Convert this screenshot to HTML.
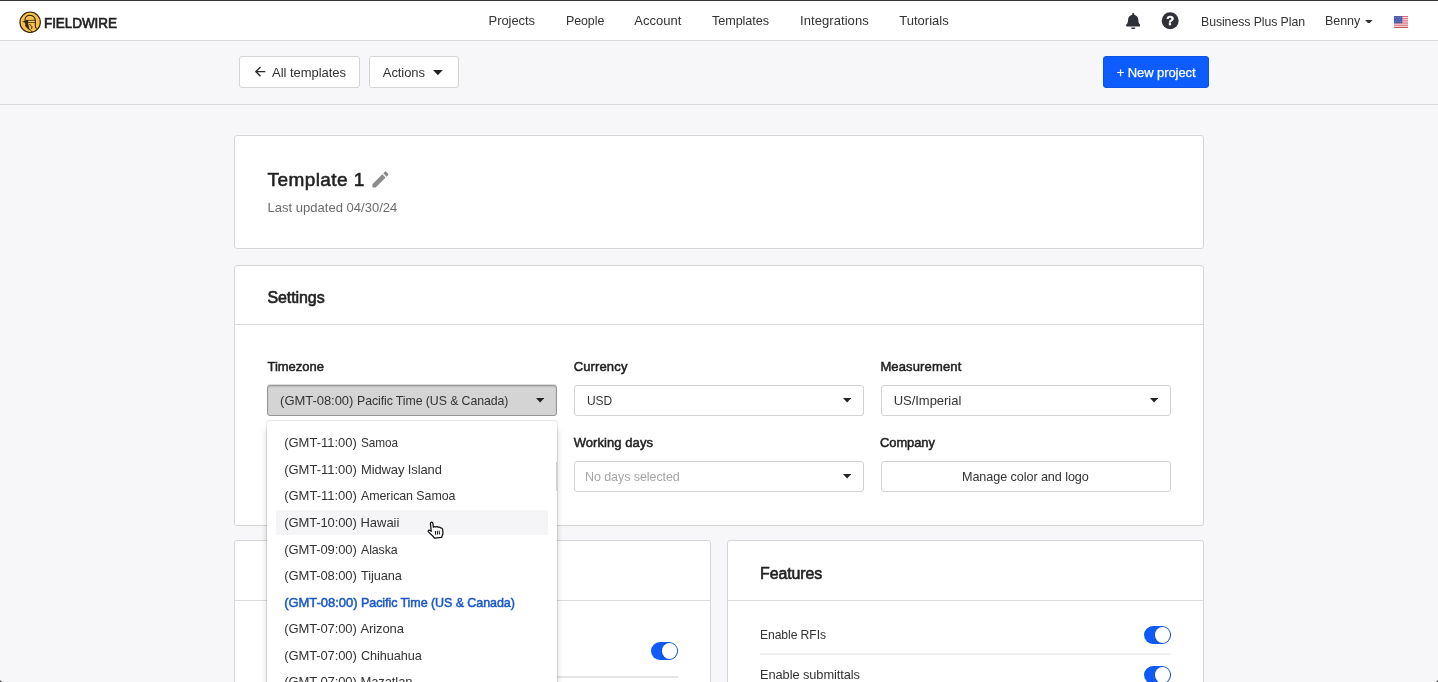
<!DOCTYPE html>
<html lang="en">
<head>
<meta charset="utf-8">
<title>Template 1 – Fieldwire</title>
<style>
*{box-sizing:border-box;margin:0;padding:0}
html,body{width:1438px;height:682px;overflow:hidden;background:#f7f7f9;font-family:"Liberation Sans",sans-serif;color:#333}
body{position:relative}
#app{position:absolute;left:0;top:0;width:1438px;height:682px;overflow:hidden;will-change:transform}
.t{position:absolute;white-space:pre;line-height:20px;height:20px;transform-origin:0 50%}
.abs{position:absolute}
.topline{left:0;top:0;width:1438px;height:1px;background:#353535}
.topbar{left:0;top:1px;width:1438px;height:40px;background:#fff;border-bottom:1px solid #dadada}
.subbar{left:0;top:41px;width:1438px;height:64px;background:#f7f7f9;border-bottom:1px solid #dadada}
.btn{position:absolute;top:56px;height:32px;background:#fff;border:1px solid #d4d4d4;border-radius:3px}
.btn.primary{background:#0d5cff;border-color:#0b52e6}
.card{position:absolute;background:#fff;border:1px solid #d5d5d5;border-radius:3px}
.hr{position:absolute;height:1px;background:#dcdcdc}
.row-hr{position:absolute;height:1px;background:#ececec}
.sel{position:absolute;width:290px;height:31px;background:#fff;border:1px solid #d2d2d2;border-radius:3px}
.sel.open{background:#d4d4d4;border-color:#959595;box-shadow:0 -1px 0 rgba(0,0,0,.13),inset 0 1px 2px rgba(0,0,0,.13)}
.menu{position:absolute;left:267px;top:421px;width:290px;height:280px;background:#fff;border-radius:3px;box-shadow:0 0 0 1px rgba(0,0,0,.09),0 8px 6px rgba(0,0,0,.2)}
.hover{position:absolute;left:276px;top:510px;width:272px;height:24.5px;background:#f5f5f8;border-radius:2px}
.help{width:17px;height:17px;border-radius:50%;background:#2f3137;color:#fff;font-size:13px;font-weight:700;line-height:17.5px;text-align:center;-webkit-text-stroke:.4px #fff}
.tog{position:absolute;width:27px;height:17.5px;border-radius:9px;background:#0f5af8}
.tog i{position:absolute;right:1px;top:1px;width:15.5px;height:15.5px;border-radius:50%;background:#fff;box-shadow:0 0 0 .6px rgba(22,60,150,.6)}
</style>
</head>
<body>
<div id="app">
<div class="abs topline"></div>

<header class="abs topbar"></header>
<svg class="abs" style="left:18px;top:10px" width="24" height="24" viewBox="0 0 24 24">
  <circle cx="12.15" cy="12.25" r="10.2" fill="#f6c04d" stroke="#2d1e04" stroke-width="1.15"/>
  <path d="M7 9.6C7.1 7 9.4 5.2 11.9 5.3c3 .1 5.300 2.200 5.500 6.100l-.1 4.600c0 1.300.4 1.900 1.100 2.300" fill="none" stroke="#2d1e04" stroke-width="1.05" stroke-linecap="round"/>
  <path d="M8.600 10.400H17.300M8.600 12.300H17.300" stroke="#2d1e04" stroke-width=".85" fill="none"/>
  <path d="M10.800 11.350H16.600" stroke="#fbdc8c" stroke-width=".8" fill="none"/>
  <path d="M3.800 12l5-1.900v2.500z" fill="#2d1e04"/>
  <path d="M6.300 10.300h3.600l.3 3.800 1.500 5.700-2.600-1.500-2.100-2.500.55-1.700-.9-1.100z" fill="#33270f"/>
  <path d="M11.500 14c.6 1.400 2.300 1.700 2.500 3 .1 .8-.3 1.500-.7 2" fill="none" stroke="#2d1e04" stroke-width=".95"/>
  <path d="M10.400 18.900c1.300.6 2.700 1.600 3.700 2.900" fill="none" stroke="#2d1e04" stroke-width="1"/>
</svg>
<span class="t brand" style="left:44.3px;top:13px;font-size:14px;color:#222;letter-spacing:-0.080px;transform:scaleX(0.9657);-webkit-text-stroke:.65px #222;">FIELDWIRE</span>
<nav>
<span class="t nav" style="left:488.6px;top:11px;font-size:13px;color:#333;letter-spacing:-0.081px;">Projects</span><span class="t nav" style="left:565.7px;top:11px;font-size:13px;color:#333;letter-spacing:-0.080px;transform:scaleX(0.9555);">People</span><span class="t nav" style="left:634.3px;top:11px;font-size:13px;color:#333;letter-spacing:0.003px;">Account</span><span class="t nav" style="left:712.3px;top:11px;font-size:13px;color:#333;letter-spacing:-0.080px;transform:scaleX(0.9725);">Templates</span><span class="t nav" style="left:800.0px;top:11px;font-size:13px;color:#333;letter-spacing:0.069px;">Integrations</span><span class="t nav" style="left:899.3px;top:11px;font-size:13px;color:#333;letter-spacing:0.003px;">Tutorials</span>
</nav>
<!-- bell -->
<svg class="abs" style="left:1125.8px;top:12.6px" width="14.4" height="16.5" viewBox="0 0 448 512"><path fill="#2f3137" d="M224 512c35.32 0 63.97-28.65 63.97-64H160.03c0 35.35 28.65 64 63.97 64zm215.39-149.71c-19.32-20.76-55.47-51.99-55.47-154.29 0-77.7-54.48-139.9-127.94-155.16V32c0-17.67-14.32-32-31.98-32s-31.98 14.33-31.98 32v20.84C118.56 68.1 64.08 130.3 64.08 208c0 102.3-36.15 133.53-55.47 154.29-6 6.45-8.66 14.16-8.61 21.71.11 16.4 12.98 32 32.1 32h383.8c19.12 0 32-15.6 32.1-32 .05-7.55-2.61-15.27-8.61-21.71z"/></svg>
<!-- help -->
<div class="abs help" style="left:1161px;top:12px;transform:translate(.7px,.2px)">?</div>
<span class="t nav" style="left:1200.6px;top:12px;font-size:13px;color:#333;letter-spacing:-0.080px;transform:scaleX(0.9461);">Business Plus Plan</span><span class="t nav" style="left:1325.0px;top:11px;font-size:13px;color:#333;letter-spacing:-0.080px;transform:scaleX(0.9629);">Benny</span>
<svg class="abs" style="left:1365.2px;top:19.6px" width="7.6" height="3.9" viewBox="0 0 7.6 3.9"><path d="M0 0H7.6L3.8 3.9Z" fill="#333"/></svg>
<!-- flag -->
<svg class="abs" style="left:1393.8px;top:15.8px" width="14.6" height="12" viewBox="0 0 14.6 12">
  <rect width="14.6" height="12" rx=".6" fill="#f6eaec"/>
  <g fill="#e0636d"><rect y="0" width="14.600" height=".95"/><rect y="1.850" width="14.600" height=".95"/><rect y="3.700" width="14.600" height=".95"/><rect y="5.550" width="14.600" height=".95"/><rect y="7.400" width="14.600" height=".95"/><rect y="9.250" width="14.600" height=".95"/><rect y="11" width="14.600" height="1" rx=".4" fill="#c9505b"/></g>
  <rect width="8.300" height="7.300" fill="#4a5eab"/>
  <g fill="#aab3dc"><circle cx="1.500" cy="1.500" r=".45"/><circle cx="4.100" cy="1.500" r=".45"/><circle cx="6.700" cy="1.500" r=".45"/><circle cx="2.800" cy="3.600" r=".45"/><circle cx="5.400" cy="3.600" r=".45"/><circle cx="1.500" cy="5.700" r=".45"/><circle cx="4.100" cy="5.700" r=".45"/><circle cx="6.700" cy="5.700" r=".45"/></g>
</svg>

<section class="abs subbar"></section>
<div class="btn" style="left:239px;width:121px"></div>
<svg class="abs" style="left:254.5px;top:66.1px" width="11" height="11.4" viewBox="0 0 11 11.4"><path d="M10.3 5.6H1.500M5.500 1L.900 5.600l4.600 4.600" fill="none" stroke="#2a2a2a" stroke-width="1.4"/></svg>
<span class="t" style="left:272.1px;top:63px;font-size:13px;color:#333;letter-spacing:-0.043px;">All templates</span>
<div class="btn" style="left:369px;width:90px"></div>
<span class="t" style="left:382.8px;top:63px;font-size:13px;color:#333;letter-spacing:-0.073px;">Actions</span>
<svg class="abs" style="left:432.8px;top:70.1px" width="9.8" height="5.2" viewBox="0 0 9.8 5.2"><path d="M0 0H9.8L4.9 5.2Z" fill="#222"/></svg>
<div class="btn primary" style="left:1103px;width:106px"></div>
<span class="t" style="left:1116.7px;top:63px;font-size:13px;color:#fff;letter-spacing:-0.079px;-webkit-text-stroke:.25px #fff;">+ New project</span>

<!-- card: template title -->
<section class="card" style="left:234px;top:135px;width:970px;height:114px"></section>
<span class="t h1" style="left:267.5px;top:170px;font-size:19px;color:#222;letter-spacing:0.427px;-webkit-text-stroke:.55px #222;">Template 1</span>
<svg class="abs" style="left:371.5px;top:170.5px" width="17" height="17" viewBox="0 0 24 24"><path fill="#8c8c8c" d="M3 17.25V21h3.75L17.81 9.94l-3.75-3.75L3 17.25zM20.71 7.04a.996.996 0 0 0 0-1.41l-2.34-2.34a.996.996 0 0 0-1.41 0l-1.83 1.83 3.75 3.75 1.83-1.83z" transform="translate(-3.2 -3.2) scale(1.26)"/></svg>
<span class="t" style="left:267.5px;top:198px;font-size:13px;color:#6b6b6b;letter-spacing:0.020px;">Last updated 04/30/24</span>

<!-- card: settings -->
<section class="card" style="left:234px;top:265px;width:970px;height:261px"></section>
<span class="t h2" style="left:267.4px;top:288px;font-size:16px;color:#222;letter-spacing:-0.073px;-webkit-text-stroke:.6px #222;">Settings</span>
<div class="hr" style="left:235px;top:324px;width:968px"></div>
<span class="t lbl" style="left:267.5px;top:357px;font-size:13px;color:#222;letter-spacing:-0.030px;-webkit-text-stroke:.5px #222;">Timezone</span><span class="t lbl" style="left:573.7px;top:357px;font-size:13px;color:#222;letter-spacing:0.136px;-webkit-text-stroke:.5px #222;">Currency</span><span class="t lbl" style="left:880.4px;top:357px;font-size:13px;color:#222;letter-spacing:0.142px;-webkit-text-stroke:.5px #222;">Measurement</span>
<div class="sel open" style="left:267px;top:385px"></div>
<span class="t" style="left:280.1px;top:391px;font-size:13px;color:#333;letter-spacing:-0.039px;">(GMT-08:00)</span><span class="t" style="left:356.8px;top:391px;font-size:13px;color:#333;letter-spacing:-0.080px;transform:scaleX(0.9472);">Pacific Time (US &amp; Canada)</span>
<svg class="abs" style="left:536.3px;top:398.2px" width="8.2" height="4.4" viewBox="0 0 8.2 4.4"><path d="M0 0H8.2L4.1 4.4Z" fill="#222"/></svg>
<div class="sel" style="left:574px;top:385px"></div>
<span class="t" style="left:586.9px;top:391px;font-size:13px;color:#333;letter-spacing:-0.080px;transform:scaleX(0.9196);">USD</span>
<svg class="abs" style="left:843.3px;top:398.2px" width="8.2" height="4.4" viewBox="0 0 8.2 4.4"><path d="M0 0H8.2L4.1 4.4Z" fill="#222"/></svg>
<div class="sel" style="left:881px;top:385px"></div>
<span class="t" style="left:893.7px;top:391px;font-size:13px;color:#333;letter-spacing:-0.032px;">US/Imperial</span>
<svg class="abs" style="left:1150.3px;top:398.2px" width="8.2" height="4.4" viewBox="0 0 8.2 4.4"><path d="M0 0H8.2L4.1 4.4Z" fill="#222"/></svg>
<div class="sel" style="left:267px;top:461px"></div>
<span class="t lbl" style="left:573.7px;top:433px;font-size:13px;color:#222;letter-spacing:0.071px;-webkit-text-stroke:.5px #222;">Working days</span><span class="t lbl" style="left:880.4px;top:433px;font-size:13px;color:#222;letter-spacing:-0.080px;transform:scaleX(0.9953);-webkit-text-stroke:.5px #222;">Company</span>
<div class="sel" style="left:574px;top:461px"></div>
<span class="t" style="left:585.2px;top:467px;font-size:13px;color:#a5a5a5;letter-spacing:-0.080px;transform:scaleX(0.9621);">No days selected</span>
<svg class="abs" style="left:843.3px;top:474.2px" width="8.2" height="4.4" viewBox="0 0 8.2 4.4"><path d="M0 0H8.2L4.1 4.4Z" fill="#222"/></svg>
<div class="sel" style="left:881px;top:461px"></div>
<span class="t" style="left:962.2px;top:467px;font-size:13px;color:#333;letter-spacing:-0.080px;transform:scaleX(0.9704);">Manage color and logo</span>

<!-- lower cards -->
<section class="card" style="left:234px;top:540px;width:477px;height:181px"></section>
<div class="hr" style="left:235px;top:600px;width:475px"></div>
<div class="tog" style="left:651px;top:642px"><i></i></div>
<div class="row-hr" style="left:267px;top:676px;width:411px;height:2px;background:#e5e5e5"></div>

<section class="card" style="left:727px;top:540px;width:477px;height:181px"></section>
<span class="t h2" style="left:760.3px;top:564px;font-size:16px;color:#222;letter-spacing:-0.080px;transform:scaleX(0.9955);-webkit-text-stroke:.6px #222;">Features</span>
<div class="hr" style="left:728px;top:600px;width:475px"></div>
<span class="t" style="left:760.3px;top:625px;font-size:13px;color:#333;letter-spacing:-0.080px;transform:scaleX(0.9329);">Enable RFIs</span>
<div class="tog" style="left:1144px;top:626px"><i></i></div>
<div class="row-hr" style="left:760px;top:653px;width:411px;height:2px;background:#f1f1f1"></div>
<span class="t" style="left:760.3px;top:665px;font-size:13px;color:#333;letter-spacing:-0.080px;transform:scaleX(0.9867);">Enable submittals</span>
<div class="tog" style="left:1144px;top:666px"><i></i></div>

<!-- open timezone menu -->
<div class="menu"></div>
<div class="hover"></div>
<div class="abs" style="left:556px;top:462px;width:1px;height:29px;background:#cfcfcf"></div>
<span class="t opt" style="left:284.2px;top:433px;font-size:13px;color:#333;letter-spacing:-0.012px;">(GMT-11:00)</span> <span class="t opt" style="left:360.5px;top:433px;font-size:13px;color:#333;letter-spacing:-0.080px;transform:scaleX(0.9075);">Samoa</span><span class="t opt" style="left:284.2px;top:460px;font-size:13px;color:#333;letter-spacing:-0.012px;">(GMT-11:00)</span> <span class="t opt" style="left:360.5px;top:460px;font-size:13px;color:#333;letter-spacing:-0.080px;transform:scaleX(0.9937);">Midway Island</span><span class="t opt" style="left:284.2px;top:486px;font-size:13px;color:#333;letter-spacing:-0.012px;">(GMT-11:00)</span> <span class="t opt" style="left:360.5px;top:486px;font-size:13px;color:#333;letter-spacing:-0.080px;transform:scaleX(0.9577);">American Samoa</span><span class="t opt" style="left:284.2px;top:513px;font-size:13px;color:#333;letter-spacing:-0.109px;">(GMT-10:00)</span> <span class="t opt" style="left:360.5px;top:513px;font-size:13px;color:#333;letter-spacing:-0.043px;">Hawaii</span><span class="t opt" style="left:284.2px;top:540px;font-size:13px;color:#333;letter-spacing:-0.109px;">(GMT-09:00)</span> <span class="t opt" style="left:360.5px;top:540px;font-size:13px;color:#333;letter-spacing:-0.080px;transform:scaleX(0.9500);">Alaska</span><span class="t opt" style="left:284.2px;top:566px;font-size:13px;color:#333;letter-spacing:-0.109px;">(GMT-08:00)</span> <span class="t opt" style="left:360.5px;top:566px;font-size:13px;color:#333;letter-spacing:-0.080px;transform:scaleX(0.9814);">Tijuana</span><span class="t opt" style="left:284.2px;top:593px;font-size:13px;color:#1b57c7;letter-spacing:-0.039px;-webkit-text-stroke:.5px #1b57c7;">(GMT-08:00)</span> <span class="t opt" style="left:361.2px;top:593px;font-size:13px;color:#1b57c7;letter-spacing:-0.080px;transform:scaleX(0.9628);-webkit-text-stroke:.5px #1b57c7;">Pacific Time (US &amp; Canada)</span><span class="t opt" style="left:284.2px;top:619px;font-size:13px;color:#333;letter-spacing:-0.109px;">(GMT-07:00)</span> <span class="t opt" style="left:360.5px;top:619px;font-size:13px;color:#333;letter-spacing:-0.113px;">Arizona</span><span class="t opt" style="left:284.2px;top:646px;font-size:13px;color:#333;letter-spacing:-0.109px;">(GMT-07:00)</span> <span class="t opt" style="left:360.5px;top:646px;font-size:13px;color:#333;letter-spacing:-0.080px;transform:scaleX(0.9751);">Chihuahua</span><span class="t opt" style="left:284.2px;top:672px;font-size:13px;color:#333;letter-spacing:-0.109px;">(GMT-07:00)</span> <span class="t opt" style="left:360.5px;top:672px;font-size:13px;color:#333;letter-spacing:-0.107px;">Mazatlan</span>

<!-- pointer cursor -->
<svg class="abs" style="left:426px;top:521px" width="18" height="19" viewBox="0 0 18 19">
  <g transform="translate(.5 -.3) rotate(-6 9 10)">
  <path d="M4.700 2.400C4.700 1.400 5.300 1 5.950 1 6.600 1 7.200 1.400 7.200 2.400V6.300C8 5.700 9 5.700 9.600 6.400 10.400 5.900 11.600 6.100 12.100 6.900 12.900 6.600 13.900 6.900 14.300 7.800 15.300 7.700 16.200 8.400 16.200 9.600V12.800C16.200 14.600 15 15.500 14.400 17.200H7.200C6.200 15.200 3.900 12.900 2 10.700 1.200 9.700 2 8.500 3.200 9L4.700 10.200Z" fill="#fff" stroke="#111" stroke-width="1.25" stroke-linejoin="round"/>
  <path d="M8.800 10.300V14.100M10.700 10.300V14.100M12.600 10.300V14.100" stroke="#111" stroke-width=".95" fill="none"/>
  </g>
</svg>
<div class="abs" style="left:0;top:680px;width:2px;height:2px;background:radial-gradient(circle at 100% 0,transparent 1.2px,#444 2px)"></div>
<div class="abs" style="left:1436px;top:680px;width:2px;height:2px;background:radial-gradient(circle at 0 0,transparent 1.2px,#444 2px)"></div>
</div>
</body>
</html>
